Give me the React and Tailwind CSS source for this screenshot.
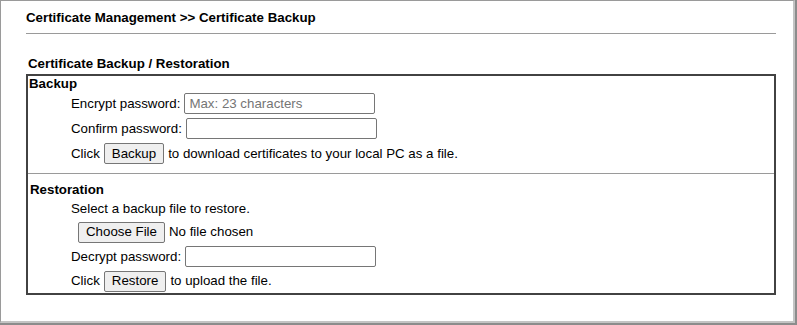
import React from 'react';

const font = { fontFamily: '"Liberation Sans", Arial, sans-serif' };

const Btn = ({ children, className = '' }) => (
    <button
        type="button"
        className={`h-[21px] px-[7px] bg-[#efefef] border border-[#767676] rounded-[2px] text-[13.3px] leading-none text-black ${className}`}
    >
        {children}
    </button>
);

const TextBox = ({ placeholder }) => (
    <input
        type="password"
        placeholder={placeholder}
        className="ml-[4px] w-[191px] h-[21px] px-[4px] border border-[#767676] rounded-[2px] bg-white text-[13.3px] placeholder:text-[#757575] focus:outline-none"
    />
);

const App = () => {
    return (
        <div className="w-[797px] h-[325px] bg-white text-black text-[13.3px]" style={font}>
            <div className="h-full border-r-2 border-b-2 border-[#8c8c8c]">
                <div className="h-full border-l border-t border-r-2 border-b-2 border-l-[#9a9a9a] border-t-[#9a9a9a] border-r-[#c4c4c4] border-b-[#c4c4c4] pl-[25px] pt-[9px]">
                    <div className="w-[750px]">
                        {/* Page title */}
                        <div className="font-bold leading-[16px]">Certificate Management &gt;&gt; Certificate Backup</div>
                        <div className="mt-[7px] h-px bg-[#9a9a9a]" />

                        <div className="mt-[22px] pl-[2px] font-bold leading-[16px]">Certificate Backup / Restoration</div>

                        <div className="mt-[2px] border-2 border-[#424242]">
                            {/* Backup */}
                            <div className="pl-[1px] font-bold leading-[15px] h-[15px]">Backup</div>
                            <div className="pl-[43px]">
                                <div className="h-[25px] flex items-center">
                                    <span>Encrypt password:</span>
                                    <TextBox placeholder="Max: 23 characters" />
                                </div>
                                <div className="h-[25px] flex items-center">
                                    <span>Confirm password:</span>
                                    <TextBox />
                                </div>
                                <div className="h-[25px] flex items-center">
                                    <span>Click</span>
                                    <Btn className="ml-[4px]">Backup</Btn>
                                    <span className="ml-[4px]">to download certificates to your local PC as a file.</span>
                                </div>
                            </div>

                            <div className="mt-[7px] h-px bg-[#9a9a9a]" />

                            {/* Restoration */}
                            <div className="mt-[8px] pl-[2px] font-bold leading-[16px] h-[16px]">Restoration</div>
                            <div className="pl-[43px]">
                                <div className="h-[22px] flex items-center">Select a backup file to restore.</div>
                                <div className="h-[24px] flex items-center">
                                    <Btn className="ml-[7px]">Choose File</Btn>
                                    <span className="ml-[4px]">No file chosen</span>
                                </div>
                                <div className="h-[25px] flex items-center">
                                    <span>Decrypt password:</span>
                                    <TextBox />
                                </div>
                                <div className="h-[24px] flex items-center">
                                    <span>Click</span>
                                    <Btn className="ml-[4px]">Restore</Btn>
                                    <span className="ml-[4px]">to upload the file.</span>
                                </div>
                            </div>
                        </div>
                    </div>
                </div>
            </div>
        </div>
    );
};

export default App;
